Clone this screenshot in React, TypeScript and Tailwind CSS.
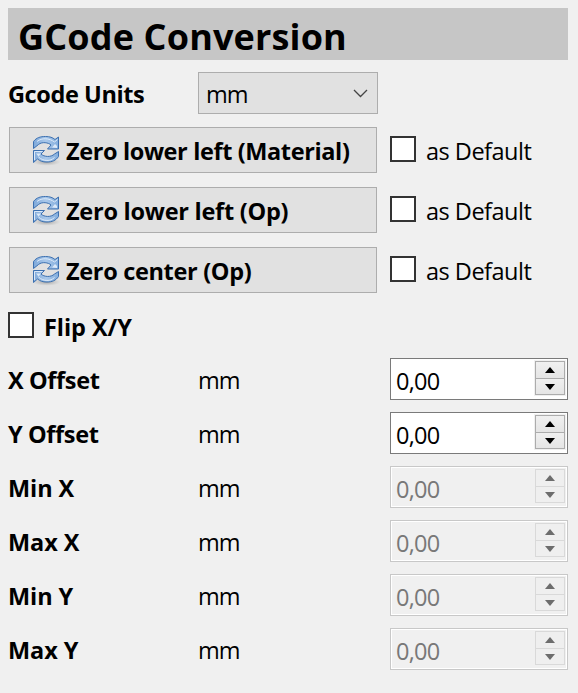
import type { ReactNode } from "react";

function RefreshIcon() {
  return (
    <svg width="30" height="32" viewBox="0 0 30 32" className="block shrink-0">
      <defs>
        <linearGradient id="arrow" x1="0" y1="0" x2="1" y2="0">
          <stop offset="0" stopColor="#7fa9da" />
          <stop offset="0.5" stopColor="#a9c8ea" />
          <stop offset="1" stopColor="#84aedd" />
        </linearGradient>
        <radialGradient id="shade">
          <stop offset="0" stopColor="#777" stopOpacity="0.6" />
          <stop offset="1" stopColor="#999" stopOpacity="0" />
        </radialGradient>
      </defs>
      <ellipse cx="14.500" cy="28" rx="14" ry="3.800" fill="url(#shade)" />
      <path
        d="M1.500 14.500V7.500C4.500 3.500 8.500 2.500 13.500 2.500c4.500 0 7 1 9.500 3l3.500-2.500v12H15.500l3.500-4C16.500 8.500 10 7.500 6.500 10.500z"
        fill="url(#arrow)"
        stroke="#3c70b0"
      />
      <path
        d="M26.500 17.500v5c-2.500 4-6.500 5.500-11.500 5.500-4.500 0-7-1-9.500-3l-4 3.500V16.500h11l-3.500 3.500c3 3 10 3.500 13.500 0z"
        fill="url(#arrow)"
        stroke="#3c70b0"
      />
      <path d="M5 7.500C10 3.500 17 4 22.500 8l3-2.500M2.500 26v-8.500h8M22.500 23.500c-4 4-11 4-16-.5" fill="none" stroke="#dce9f8" />
      <path d="M20 13.500l3-3.500 2 2v2zM4 19.500h5l-2.500 3z" fill="#dce9f8" />
    </svg>
  );
}

function CheckBox() {
  return <span className="block size-[26px] shrink-0 border-2 border-[#333] bg-white" />;
}

function ZeroRow({ children }: { children: ReactNode }) {
  return (
    <div className="flex h-[46px]">
      <button className="ml-px flex h-[46px] w-[368px] shrink-0 items-center border border-[#adadad] bg-[#e1e1e1] pl-[22px] font-bold">
        <RefreshIcon />
        <span className="ml-[4px] pt-px whitespace-nowrap">{children}</span>
      </button>
      <label className="ml-[13px] flex items-start pt-[9px]">
        <CheckBox />
        <span className="ml-[10px] leading-[31px] tracking-[-0.5px] whitespace-nowrap">as Default</span>
      </label>
    </div>
  );
}

function Arrow({ down, disabled }: { down?: boolean; disabled?: boolean }) {
  return (
    <svg width="10" height="6" viewBox="0 0 10 6" className="block">
      <path d={down ? "M0 0h10L5 6z" : "M0 6h10L5 0z"} fill={disabled ? "#6d6d6d" : "#000"} />
    </svg>
  );
}

function SpinBox({ disabled }: { disabled?: boolean }) {
  const line = disabled ? "border-[#d9d9d9]" : "border-[#acacac]";
  const face = disabled ? "bg-[#efefef]" : "bg-linear-to-b from-[#f0f0f0] to-[#e5e5e5]";
  return (
    <div
      className={
        disabled
          ? "flex h-[42px] w-[178px] border border-[#c8c8c8] bg-[#f0f0f0] pl-[5px] text-[#787878] shadow-[inset_0_0_0_1px_#fff]"
          : "flex h-[42px] w-[178px] border border-[#7a7a7a] bg-white pl-[5px] text-black"
      }
    >
      <span className="flex-1 pt-[4px] leading-[36px] tracking-[-0.75px]">0,00</span>
      <div className="mt-px mr-px flex h-[36px] w-[32px] flex-col bg-[#f0f0f0] p-px">
        <span className={`flex h-[18px] items-center justify-center border ${line} ${face}`}>
          <Arrow disabled={disabled} />
        </span>
        <span className={`flex h-[16px] items-center justify-center border border-t-0 ${line} ${face}`}>
          <Arrow down disabled={disabled} />
        </span>
      </div>
    </div>
  );
}

function ValueRow({ label, disabled }: { label: ReactNode; disabled?: boolean }) {
  return (
    <div className="flex h-[42px]">
      <span className="w-[190px] pt-px leading-[42px] font-bold">{label}</span>
      <span className="w-[192px] pt-px leading-[42px] tracking-[-0.9px]">mm</span>
      <SpinBox disabled={disabled} />
    </div>
  );
}

export default function App() {
  return (
    <main className="h-[693px] w-[578px] bg-[#f0f0f0] px-[8px] pt-[8px] font-['Open_Sans','Noto_Sans',sans-serif] text-[23.5px] leading-[32px] text-black">
      <h1 className="h-[52px] w-[560px] bg-[#c6c6c6] pt-px pl-[10px] text-[36px] leading-[56px] font-bold whitespace-nowrap">
        <span className="tracking-[0.15px]">GCode Conversion</span>
      </h1>
      <div className="mt-[12px] flex h-[42px]">
        <span className="w-[190px] pt-px leading-[42px] font-bold">
          <span className="tracking-[-0.4px]">Gcode Units</span>
        </span>
        <div className="flex h-[42px] w-[180px] items-center justify-between border border-[#adadad] bg-[#e1e1e1] pr-[9px] pl-[7px]">
          <span className="pt-px tracking-[-0.9px]">mm</span>
          <svg width="15" height="9" viewBox="0 0 15 9">
            <path d="M1 1l6.500 6.500L14 1" fill="none" stroke="#444" strokeWidth="1.300" />
          </svg>
        </div>
      </div>
      <div className="mt-[13px] flex flex-col gap-[14px]">
        <ZeroRow><span className="tracking-[-0.38px]">Zero lower left (Material)</span></ZeroRow>
        <ZeroRow><span className="tracking-[-0.25px]">Zero lower left (Op)</span></ZeroRow>
        <ZeroRow><span className="tracking-[-0.33px]">Zero center (Op)</span></ZeroRow>
      </div>
      <label className="mt-[19px] flex h-[26px] items-start font-bold">
        <CheckBox />
        <span className="ml-[10px] leading-[31px] tracking-[-0.05px]">Flip X/Y</span>
      </label>
      <div className="mt-[20px] flex flex-col gap-[12px]">
        <ValueRow label={<span className="tracking-[-0.37px]">X Offset</span>} />
        <ValueRow label={<span className="tracking-[-0.37px]">Y Offset</span>} />
        <ValueRow label={<span className="tracking-[-0.1px]">Min X</span>} disabled />
        <ValueRow label={<span className="tracking-[-0.1px]">Max X</span>} disabled />
        <ValueRow label={<span className="tracking-[-0.1px]">Min Y</span>} disabled />
        <ValueRow label={<span className="tracking-[-0.1px]">Max Y</span>} disabled />
      </div>
    </main>
  );
}
